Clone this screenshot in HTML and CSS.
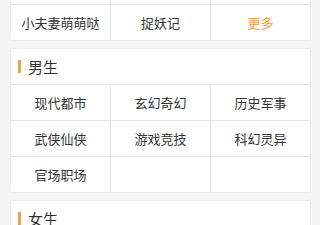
FILE: index.html
```html
<!DOCTYPE html>
<html lang="zh-CN">
<head>
  <meta charset="UTF-8" />
  <meta name="viewport" content="width=device-width, initial-scale=1.0"/>
  <title>分类</title>
  <link rel="stylesheet" href="styles.css">
</head>
<body>
  <div class="page">
    <div class="section">
      <div class="grid">
        <div class="cell"></div>
        <div class="cell"></div>
        <div class="cell"></div>
        <div class="cell">小夫妻萌萌哒</div>
        <div class="cell">捉妖记</div>
        <div class="cell more">更多</div>
      </div>
    </div>

    <div class="section">
      <div class="section-head">男生</div>
      <div class="grid">
        <div class="cell">现代都市</div>
        <div class="cell">玄幻奇幻</div>
        <div class="cell">历史军事</div>
        <div class="cell">武侠仙侠</div>
        <div class="cell">游戏竞技</div>
        <div class="cell">科幻灵异</div>
        <div class="cell">官场职场</div>
        <div class="cell"></div>
        <div class="cell"></div>
      </div>
    </div>

    <div class="section">
      <div class="section-head">女生</div>
    </div>
  </div>
</body>
</html>
```

FILE: styles.css
```css
body {
  margin: 0;
  background: #f4f4f4;
  font-family: "Noto Sans CJK SC", "Noto Sans", sans-serif;
  color: #333;
}

.page {
  margin-top: -32px;
}

.section {
  margin: 0 9px 7px 10px;
  background: #fff;
  border: 1px solid #ececec;
  border-radius: 2px;
  overflow: hidden;
}

.section-head {
  height: 35px;
  display: flex;
  align-items: center;
  padding-left: 7px;
  font-size: 15px;
  color: #333;
  border-bottom: 1px solid #e6e6e6;
}

.section-head::before {
  content: "";
  width: 3px;
  height: 13px;
  margin-right: 7px;
  background: #f0a048;
}

.grid {
  display: grid;
  grid-template-columns: 100px 100px 1fr;
}

.cell {
  height: 35px;
  display: flex;
  align-items: center;
  justify-content: center;
  font-size: 13px;
  color: #333;
  border-right: 1px solid #e6e6e6;
  border-bottom: 1px solid #e6e6e6;
}

.cell:nth-child(3n) {
  border-right: none;
}

.cell:nth-last-child(-n+3) {
  border-bottom: none;
}

.more {
  color: #f0a048;
}
```
